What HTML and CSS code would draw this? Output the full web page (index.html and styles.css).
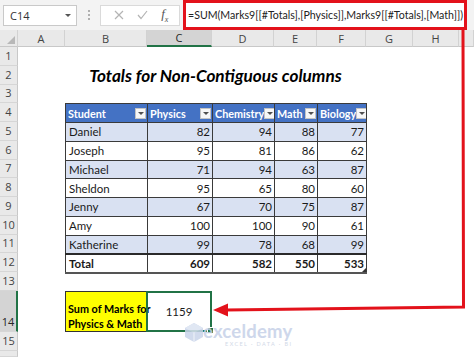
FILE: index.html
```html
<!DOCTYPE html>
<html>
<head>
    <title>Totals for Non-Contiguous columns</title>
    <link rel="stylesheet" href="styles.css">
</head>
<body>
    <div class="window">
        <!-- Formula bar -->
        <div class="formula-row">
            <div class="name-box">
                <span>C14</span>
                <span class="caret"></span>
            </div>
            <div class="grip">
                <span></span><span></span><span></span>
            </div>
            <div class="fx-box">
                <svg width="10" height="10" viewBox="0 0 10 10"><path d="M1 1 L9 9 M9 1 L1 9" stroke="#b4b4b4" stroke-width="1.2" fill="none"/></svg>
                <svg width="11" height="10" viewBox="0 0 11 10"><path d="M1 5 L4 8.5 L10 1" stroke="#b4b4b4" stroke-width="1.2" fill="none"/></svg>
                <span class="fx">f<sub>x</sub></span>
            </div>
            <div class="formula">=SUM(Marks9[[#Totals],[Physics]],Marks9[[#Totals],[Math]])</div>
        </div>

        <!-- Worksheet -->
        <div class="sheet">
            <div class="col-head corner"><span class="corner-mark"></span></div>
            <div class="col-head">A</div>
            <div class="col-head">B</div>
            <div class="col-head active">C</div>
            <div class="col-head">D</div>
            <div class="col-head">E</div>
            <div class="col-head">F</div>
            <div class="col-head">G</div>
            <div class="col-head">H</div>
            <div class="col-head"></div>

            <div class="row-head">1</div>
            <div class="row-head">2</div>
            <div class="row-head">3</div>
            <div class="row-head">4</div>
            <div class="row-head">5</div>
            <div class="row-head">6</div>
            <div class="row-head">7</div>
            <div class="row-head">8</div>
            <div class="row-head">9</div>
            <div class="row-head">10</div>
            <div class="row-head">11</div>
            <div class="row-head">12</div>
            <div class="row-head">13</div>
            <div class="row-head active">14</div>
            <div class="row-head">15</div>
            <div class="row-head"></div>

            <div class="title">Totals for Non-Contiguous columns</div>

            <table class="marks">
                <colgroup>
                    <col style="width:82px"><col style="width:65px"><col style="width:62px"><col style="width:43px"><col style="width:49px">
                </colgroup>
                <tr class="head">
                    <th><div class="th-in"><span>Student</span><span class="filter"></span></div></th>
                    <th><div class="th-in"><span>Physics</span><span class="filter"></span></div></th>
                    <th><div class="th-in"><span>Chemistry</span><span class="filter"></span></div></th>
                    <th><div class="th-in"><span>Math</span><span class="filter"></span></div></th>
                    <th><div class="th-in"><span>Biology</span><span class="filter"></span></div></th>
                </tr>
                <tr class="band"><td>Daniel</td><td>82</td><td>94</td><td>88</td><td>77</td></tr>
                <tr><td>Joseph</td><td>95</td><td>81</td><td>86</td><td>62</td></tr>
                <tr class="band"><td>Michael</td><td>71</td><td>94</td><td>63</td><td>87</td></tr>
                <tr><td>Sheldon</td><td>95</td><td>65</td><td>80</td><td>60</td></tr>
                <tr class="band"><td>Jenny</td><td>67</td><td>70</td><td>75</td><td>87</td></tr>
                <tr><td>Amy</td><td>100</td><td>100</td><td>90</td><td>61</td></tr>
                <tr class="band"><td>Katherine</td><td>99</td><td>78</td><td>68</td><td>99</td></tr>
                <tr class="total"><td>Total</td><td>609</td><td>582</td><td>550</td><td>533<span class="resize"></span></td></tr>
            </table>

            <div class="sum-label">Sum of Marks for<br>Physics &amp; Math</div>
            <div class="sum-value">1159<span class="handle"></span></div>
        </div>

        <!-- Callout arrow -->
        <svg class="callout" width="474" height="357" viewBox="0 0 474 357">
            <path d="M463 29 L463.5 307 L226 310" stroke="#e3121b" stroke-width="3" fill="none"/>
            <polygon points="213,310 228,303.5 228,316.5" fill="#e3121b"/>
        </svg>

        <!-- Watermark -->
        <div class="watermark">
            <svg width="20" height="21" viewBox="0 0 20 21">
                <path d="M10 1 L19 6 L19 15 L10 20 L1 15 L1 6 Z" fill="#c9d4ea"/>
                <path d="M10 1 L19 6 L10 11 L1 6 Z" fill="#dbe3f2"/>
                <path d="M10 11 L10 20" stroke="#eef2f9" stroke-width="1"/>
            </svg>
            <div class="wm-text">
                <span class="wm-name">exceldemy</span>
                <span class="wm-sub">EXCEL · DATA · BI</span>
            </div>
        </div>
    </div>
</body>
</html>
```

FILE: styles.css
```css
body {
    margin: 0;
    padding: 0;
    background: #ffffff;
    font-family: 'Open Sans', sans-serif;
    overflow: hidden;
}

.window {
    position: relative;
    width: 474px;
    height: 357px;
    overflow: hidden;
}

/* Formula bar */

.formula-row {
    height: 30px;
    display: flex;
    align-items: center;
    background: #f3f3f3;
    padding-left: 3px;
    box-sizing: border-box;
}

.name-box {
    width: 74px;
    height: 21px;
    box-sizing: border-box;
    border: 1px solid #c9c9c9;
    background: #ffffff;
    display: flex;
    align-items: center;
    justify-content: space-between;
    padding: 0 5px 0 6px;
    font-size: 11px;
    color: #333333;
}

.caret {
    width: 0;
    height: 0;
    border-left: 3px solid transparent;
    border-right: 3px solid transparent;
    border-top: 3px solid #555555;
}

.grip {
    width: 23px;
    display: flex;
    flex-direction: column;
    align-items: center;
    gap: 2px;
}

.grip span {
    width: 2px;
    height: 2px;
    background: #b0b0b0;
}

.fx-box {
    width: 80px;
    height: 21px;
    box-sizing: border-box;
    border: 1px solid #dadada;
    background: #ffffff;
    display: flex;
    align-items: center;
    justify-content: space-around;
    padding: 0 4px 0 6px;
}

.fx {
    font-family: 'Liberation Serif', serif;
    font-style: italic;
    font-size: 13px;
    color: #555555;
}

.fx sub {
    font-size: 8px;
}

.formula {
    align-self: flex-start;
    margin-left: 3px;
    width: 284px;
    height: 30px;
    box-sizing: border-box;
    border: 3px solid #e3121b;
    background: #ffffff;
    display: flex;
    align-items: center;
    padding-left: 2px;
    font-family: 'Lato', sans-serif;
    font-size: 10.6px;
    color: #222222;
    white-space: nowrap;
    overflow: hidden;
}

/* Worksheet grid */

.sheet {
    display: grid;
    grid-template-columns: 18px 47px 82px 65px 62px 43px 49px 47px 46px 1fr;
    grid-template-rows: 17px repeat(13, 18.75px) 41.6px 18.75px 1fr;
    height: 327px;
}

.col-head {
    background: #e9e9e9;
    border-right: 1px solid #d2d2d2;
    border-bottom: 1px solid #c8c8c8;
    display: flex;
    align-items: center;
    justify-content: center;
    font-size: 11px;
    color: #444444;
}

.col-head.active {
    background: #d4d4d4;
    border-bottom: 2px solid #217346;
    color: #262626;
}

.corner {
    position: relative;
}

.corner-mark {
    position: absolute;
    right: 2px;
    bottom: 2px;
    width: 0;
    height: 0;
    border-left: 8px solid transparent;
    border-bottom: 8px solid #b8b8b8;
}

.row-head {
    grid-column: 1;
    background: #e9e9e9;
    border-right: 1px solid #c8c8c8;
    border-bottom: 1px solid #d6d6d6;
    display: flex;
    align-items: flex-end;
    justify-content: center;
    padding-bottom: 2px;
    box-sizing: border-box;
    font-size: 11px;
    color: #444444;
}

.row-head.active {
    background: #d4d4d4;
    border-right: 2px solid #217346;
    color: #262626;
}

.title {
    grid-column: 3 / 8;
    grid-row: 3;
    align-self: center;
    text-align: center;
    font-family: 'Lato', sans-serif;
    font-weight: 700;
    font-style: italic;
    font-size: 17.2px;
    color: #000000;
}

/* Table */

.marks {
    grid-column: 3 / 8;
    grid-row: 5 / 14;
    border-collapse: collapse;
    table-layout: fixed;
    width: 301px;
    height: 168.75px;
    font-family: 'Lato', sans-serif;
    font-size: 11.5px;
    color: #1a1a1a;
}

.marks td,
.marks th {
    border: 1px solid #3a3a3a;
    padding: 0 2px 0 3px;
    height: 18.75px;
    box-sizing: border-box;
    text-align: right;
    white-space: nowrap;
    overflow: hidden;
}

.marks td:first-child {
    text-align: left;
}

.marks tr.head th {
    background: #4472c4;
    color: #ffffff;
    font-weight: 700;
    font-size: 10.8px;
    padding: 0 1px 0 2px;
}

.th-in {
    display: flex;
    align-items: center;
    justify-content: space-between;
}

.filter {
    position: relative;
    flex: none;
    width: 11px;
    height: 11px;
    background: #f7f7f7;
    border: 1px solid #c4c4c4;
    box-sizing: border-box;
}

.filter::after {
    content: "";
    position: absolute;
    left: 2px;
    top: 3px;
    border-left: 3px solid transparent;
    border-right: 3px solid transparent;
    border-top: 3px solid #505050;
}

.marks tr.band td {
    background: #d9e1f2;
}

.marks tr.total td {
    font-weight: 700;
    border-top: 2px solid #2a2a2a;
    border-bottom: 2px solid #555555;
}

.marks tr.total td:last-child {
    position: relative;
}

.resize {
    position: absolute;
    right: 0;
    bottom: 0;
    width: 0;
    height: 0;
    border-left: 4px solid transparent;
    border-bottom: 4px solid #333333;
}

/* Result cells */

.sum-label {
    grid-column: 3;
    grid-row: 15;
    background: #ffff00;
    border: 1px solid #333333;
    display: flex;
    align-items: flex-end;
    padding: 0 0 0 2px;
    font-family: 'Lato', sans-serif;
    font-weight: 700;
    font-size: 10.8px;
    line-height: 15px;
    white-space: nowrap;
    color: #000000;
}

.sum-value {
    grid-column: 4;
    grid-row: 15;
    position: relative;
    border: 2px solid #217346;
    margin-left: -1px;
    display: flex;
    align-items: center;
    justify-content: center;
    font-family: 'Lato', sans-serif;
    font-size: 11.5px;
    color: #1a1a1a;
}

.handle {
    position: absolute;
    right: -4px;
    bottom: -4px;
    width: 5px;
    height: 5px;
    background: #217346;
    border: 1px solid #ffffff;
}

/* Overlays */

.callout {
    position: absolute;
    left: 0;
    top: 0;
    pointer-events: none;
}

.watermark {
    position: absolute;
    left: 184px;
    top: 322px;
    display: flex;
    align-items: flex-start;
    opacity: 0.85;
}

.wm-text {
    display: flex;
    flex-direction: column;
    align-items: flex-end;
    margin-left: -1px;
}

.wm-name {
    font-family: 'Lato', sans-serif;
    font-weight: 700;
    font-size: 18.5px;
    line-height: 18px;
    color: #c6d1e8;
    letter-spacing: 0.2px;
}

.wm-sub {
    font-family: 'Lato', sans-serif;
    font-size: 5.5px;
    letter-spacing: 1.4px;
    color: #cbd3e4;
    margin-top: 1px;
}
```
